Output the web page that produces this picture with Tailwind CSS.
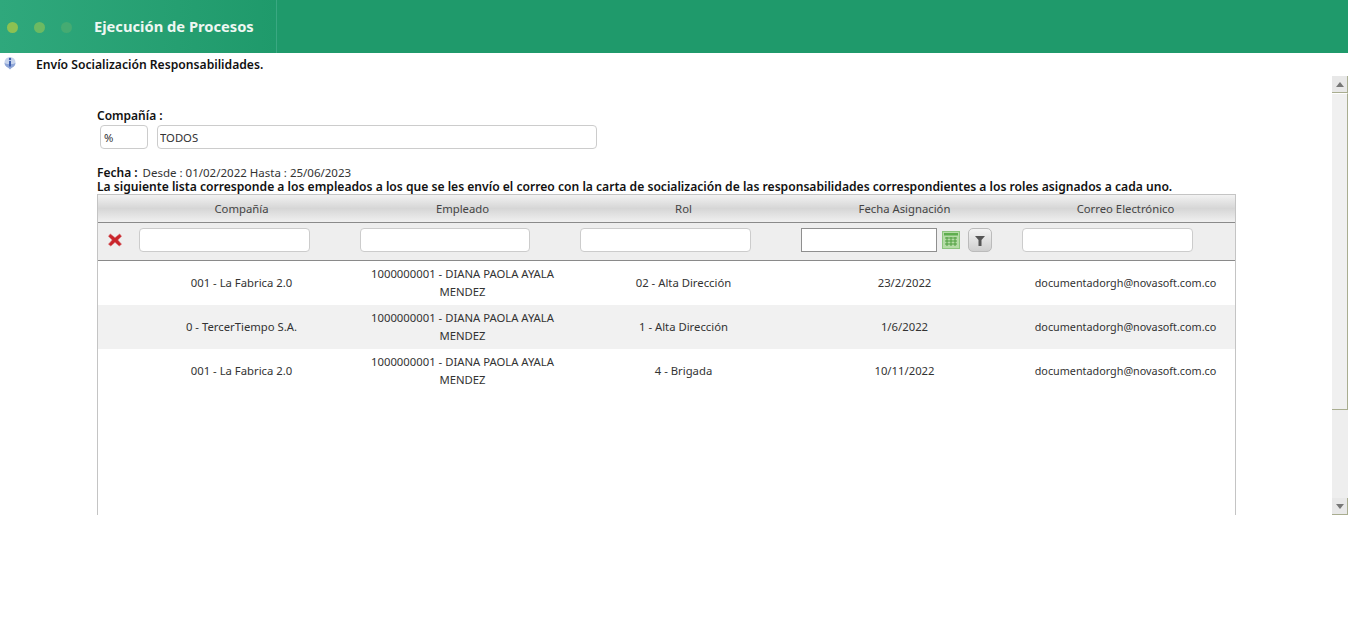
<!DOCTYPE html>
<html lang="es">
<head>
<meta charset="UTF-8">
<title>Ejecución de Procesos</title>
<script src="https://cdn.jsdelivr.net/npm/@tailwindcss/browser@4"></script>
</head>
<body class="bg-white text-[12px] text-[#333] font-['Noto_Sans','Open_Sans',sans-serif] h-[617px] overflow-hidden">

<header class="h-[53px] flex bg-[#1f9a6b]">
  <div class="w-[277px] flex items-center border-r border-[#3aa882] bg-gradient-to-r from-[#2fa87c] to-[#1f9a6b]">
    <div class="flex gap-[16px] pl-[7px] pt-[1px]">
      <span class="w-[11px] h-[11px] rounded-full bg-[#8cc152]"></span>
      <span class="w-[11px] h-[11px] rounded-full bg-[#6cba62]"></span>
      <span class="w-[11px] h-[11px] rounded-full bg-[#45ab72]"></span>
    </div>
    <h1 class="ml-[22px] text-[14.7px] font-bold text-[#eef7f2] whitespace-nowrap">Ejecución de Procesos</h1>
  </div>
</header>

<div class="h-[23px] flex items-center">
  <svg class="ml-[3px] mb-[4px]" width="14" height="14" viewBox="0 0 14 14">
    <circle cx="7" cy="6.500" r="5.500" fill="#c6d3ec"/>
    <path d="M1.500 7a5.500 5.500 0 0 0 3.500 4.500L7 13.500l2-2A5.500 5.500 0 0 0 12.500 7L10 8H4z" fill="#8ea5d6"/>
    <circle cx="7" cy="3" r="1.200" fill="#3e5fae"/>
    <rect x="6" y="5" width="2" height="5.500" fill="#3e5fae"/>
  </svg>
  <span class="ml-[19px] pt-[2px] text-[12.15px] font-semibold text-[#111]">Envío Socialización Responsabilidades.</span>
</div>

<div class="h-[439px] flex">
  <main class="flex-1 overflow-hidden pl-[97px]">
    <div class="pt-[32px] font-semibold text-[#111] leading-[16px]">Compañía :</div>
    <div class="flex mt-[1px] ml-[3px] gap-[9px]">
      <input value="%" class="w-[48px] h-[24px] pl-[3px] pt-[1px] border border-[#ccc] rounded-[4px] text-[11.300px] text-[#333]">
      <input value="TODOS" class="w-[440px] h-[24px] pl-[2px] pt-[1px] border border-[#ccc] rounded-[4px] text-[11.300px] text-[#333]">
    </div>
    <p class="mt-[16px] leading-[15px] text-[11.500px]"><b class="font-semibold text-[12px] text-[#111] mr-[2px]">Fecha :</b> Desde : 01/02/2022 Hasta : 25/06/2023</p>
    <p class="leading-[14px] text-[12.110px] font-semibold text-[#111] whitespace-nowrap">La siguiente lista corresponde a los empleados a los que se les envío el correo con la carta de socialización de las responsabilidades correspondientes a los roles asignados a cada uno.</p>

    <section class="w-[1139px] h-[400px] border border-[#c4c4c4] text-[11.300px] text-center">
      <div class="grid grid-cols-[33px_repeat(5,221px)] h-[28px] pt-[2px] items-center bg-gradient-to-b from-[#f2f2f2] via-[#d6d6d6] to-[#f0f0f0] border-b border-[#8a8a8a] text-[#444]">
        <span></span><span>Compañía</span><span>Empleado</span><span>Rol</span><span>Fecha Asignación</span><span>Correo Electrónico</span>
      </div>
      <div class="grid grid-cols-[33px_repeat(5,221px)] h-[38px] pb-[3px] items-center bg-[#eeeeee] border-b border-[#8a8a8a]">
        <span class="flex justify-center pl-[1px]">
          <svg width="14" height="14" viewBox="0 0 15 15"><path d="M2.500 1 7.500 5 12.500 1 14.500 3.500 10.500 7.500 14.500 12 12 14 7.500 10 3 14 .5 12 4.500 7.500 .5 3.500z" fill="#c9252b" stroke="#d8666a" stroke-width=".6"/></svg>
        </span>
        <div class="pl-[8px]"><input class="block w-[171px] h-[24px] bg-white border border-[#ccc] rounded-[4px]"></div>
        <div class="pl-[8px]"><input class="block w-[170px] h-[24px] bg-white border border-[#ccc] rounded-[4px]"></div>
        <div class="pl-[7px]"><input class="block w-[171px] h-[24px] bg-white border border-[#ccc] rounded-[4px]"></div>
        <div class="pl-[7px] flex items-center">
          <input class="block w-[136px] h-[24px] bg-white border border-[#8f8f8f]">
          <svg class="ml-[5px]" width="18" height="18" viewBox="0 0 18 18">
            <rect x=".5" y=".5" width="17" height="17" fill="#b5dca6" stroke="#8cc47d"/>
            <rect x="2" y="2" width="14" height="2.500" fill="#5fae4f"/>
            <path d="M5 6v9M9 6v9M13 6v9M3 7h12M3 10h12M3 13h12" stroke="#4f9e3f" fill="none"/>
          </svg>
          <button class="ml-[8px] w-[24px] h-[24px] flex items-center justify-center border border-[#bbb] rounded-[5px] bg-gradient-to-b from-[#f4f4f4] to-[#cfcfcf]">
            <svg width="10" height="11" viewBox="0 0 10 11"><path d="M0 1h10L6.500 5v6h-3V5z" fill="#555"/></svg>
          </button>
        </div>
        <div class="pl-[7px]"><input class="block w-[171px] h-[24px] bg-white border border-[#ccc] rounded-[4px]"></div>
      </div>
      <div class="grid grid-cols-[33px_repeat(5,221px)] h-[44px] items-center leading-[18px]">
        <span></span><span>001 - La Fabrica 2.0</span><span class="px-[15px]">1000000001 - DIANA PAOLA AYALA MENDEZ</span><span>02 - Alta Dirección</span><span>23/2/2022</span><span class="text-[10.800px]">documentadorgh@novasoft.com.co</span>
      </div>
      <div class="grid grid-cols-[33px_repeat(5,221px)] h-[44px] items-center leading-[18px] bg-[#f1f1f1]">
        <span></span><span>0 - TercerTiempo S.A.</span><span class="px-[15px]">1000000001 - DIANA PAOLA AYALA MENDEZ</span><span>1 - Alta Dirección</span><span>1/6/2022</span><span class="text-[10.800px]">documentadorgh@novasoft.com.co</span>
      </div>
      <div class="grid grid-cols-[33px_repeat(5,221px)] h-[44px] items-center leading-[18px]">
        <span></span><span>001 - La Fabrica 2.0</span><span class="px-[15px]">1000000001 - DIANA PAOLA AYALA MENDEZ</span><span>4 - Brigada</span><span>10/11/2022</span><span class="text-[10.800px]">documentadorgh@novasoft.com.co</span>
      </div>
    </section>
  </main>

  <div class="w-[16px] flex flex-col bg-[#eeeeee]">
    <div class="h-[17px] flex items-center justify-center bg-[#e8e8e8] border-r border-b border-[#a9ad90]">
      <svg width="8" height="5" viewBox="0 0 8 5"><path d="M0 5 4 0l4 5z" fill="#777"/></svg>
    </div>
    <div class="h-[317px] bg-[#f0f0f0] border-t border-white border-r border-b border-r-[#a9ad90] border-b-[#a9ad90]"></div>
    <div class="flex-1"></div>
    <div class="h-[17px] flex items-center justify-center bg-[#e8e8e8] border-r border-b border-[#a9ad90]">
      <svg width="8" height="5" viewBox="0 0 8 5"><path d="M0 0h8L4 5z" fill="#777"/></svg>
    </div>
  </div>
</div>
</body>
</html>
